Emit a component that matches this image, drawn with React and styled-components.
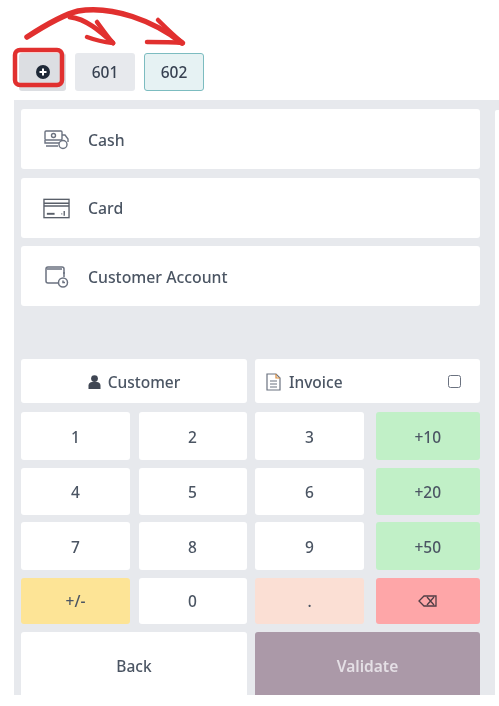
import React from "react";
import styled, { createGlobalStyle } from "styled-components";

const Global = createGlobalStyle`
  html, body { margin: 0; padding: 0; background: #fff; }
  body { font-family: "Noto Sans", "Open Sans", sans-serif; color: #4b5563; }
`;

const Page = styled.div`
  position: relative;
  width: 499px;
  height: 706px;
  overflow: hidden;
  filter: blur(0.5px);
  background: #fff;
`;

const Tabs = styled.div`
  display: flex;
  gap: 8px;
  height: 38px;
  padding: 53px 0 0 19px;
`;

const Tab = styled.div`
  width: 60px;
  height: 38px;
  box-sizing: border-box;
  border-radius: 3px;
  display: flex;
  align-items: center;
  justify-content: center;
  font-size: 15.5px;
  font-weight: 500;
  color: #374151;
  background: ${(p) => (p.$active ? "#e6f2f3" : "#e7e9ed")};
  border: ${(p) => (p.$active ? "1px solid #7cbcc0" : "none")};
  & + & { margin-left: ${(p) => (p.$active ? "1px" : "0")}; }
`;

const AddTab = styled(Tab)`
  width: 47px;
  padding-left: 1px;
  background: #dcdee2;
`;

const Panel = styled.main`
  margin: 9px 0 0 14px;
  height: 595px;
  box-sizing: border-box;
  background: #e7e9ed;
  padding: 9px 19px 0 7px;
  display: flex;
  flex-direction: column;
`;

const Methods = styled.div`
  display: flex;
  flex-direction: column;
  gap: 8.5px;
`;

const Method = styled.div`
  height: 60px;
  box-sizing: border-box;
  padding: 1px 0 0 22px;
  background: #fff;
  border-radius: 3px;
  display: flex;
  align-items: center;
  gap: 18px;
  font-size: 15.8px;
  font-weight: 500;
  color: #4b5563;
`;

const IconSlot = styled.span`
  width: 27px;
  height: 24px;
  display: flex;
  align-items: center;
  justify-content: center;
  color: #6b7280;
`;

const Actions = styled.div`
  margin-top: 53px;
  display: grid;
  grid-template-columns: 226px 225px;
  gap: 8px;
`;

const Action = styled.div`
  height: 44px;
  box-sizing: border-box;
  background: #fff;
  border-radius: 3px;
  display: flex;
  align-items: center;
  justify-content: ${(p) => (p.$spread ? "flex-start" : "center")};
  gap: ${(p) => (p.$spread ? "8px" : "7px")};
  padding: ${(p) => (p.$spread ? "1px 19px 0 11px" : "1px 0 0")};
  font-size: 15.5px;
  font-weight: 500;
  color: #4b5563;
`;

const Check = styled.span`
  margin-left: auto;
  width: 11px;
  height: 11px;
  border: 1.5px solid #6b7280;
  border-radius: 2.5px;
`;

const Pad = styled.div`
  margin-top: 9px;
  display: grid;
  grid-template-columns: 109px 108px 109px 107.5px;
  grid-template-rows: 48px 47px 48px 46px;
  column-gap: 8.5px;
  row-gap: 7.5px;
  & > :nth-child(4n) { margin-left: 3px; }
`;

const keyColors = { green: "#c1f0c7", yellow: "#fde496", peach: "#fbdfd4", red: "#fea6a8", white: "#fff" };

const Key = styled.div`
  box-sizing: border-box;
  padding-top: 1px;
  background: ${(p) => keyColors[p.$tone || "white"]};
  border-radius: 3px;
  display: flex;
  align-items: center;
  justify-content: center;
  font-size: 15.5px;
  font-weight: 500;
  color: #4b5563;
`;

const Bottom = styled.div`
  margin-top: 8px;
  display: grid;
  grid-template-columns: 226px 225px;
  gap: 8px;
`;

const BigButton = styled.div`
  height: 63px;
  box-sizing: border-box;
  padding-top: 5px;
  border-radius: 3px 3px 0 0;
  display: flex;
  align-items: center;
  justify-content: center;
  font-size: 15.5px;
  font-weight: ${(p) => (p.$primary ? 600 : 500)};
  color: ${(p) => (p.$primary ? "#e4dfe5" : "#4b5563")};
  background: ${(p) => (p.$primary ? "#ab99a8" : "#fff")};
`;

const Sliver = styled.div`
  position: absolute;
  left: 495px;
  top: 110px;
  width: 4px;
  height: 585px;
  background: #fff;
  border-radius: 2px 0 0 0;
`;

const Annotation = styled.svg`
  position: absolute;
  left: 0;
  top: 0;
  pointer-events: none;
`;

const CashIcon = () => (
  <svg width="25" height="20" viewBox="0 0 25 20" fill="none" stroke="currentColor" strokeWidth="1.4">
    <rect x="1" y="1" width="17" height="9" rx="1" />
    <circle cx="9.500" cy="5.500" r="2" />
    <path d="M1 10v3h14M2 16h12M18 5h3l3 4v3" />
    <circle cx="19" cy="14.500" r="4" fill="#fff" />
  </svg>
);
const CardIcon = () => (
  <svg width="28" height="21" viewBox="0 0 28 21" fill="none" stroke="#595f69" strokeWidth="1.4">
    <rect x="1" y="1" width="26" height="19" />
    <path d="M1 5h26M1 8h26" strokeWidth="1.6" />
    <path d="M4 16h8" strokeWidth="2" />
    <path d="M22 13v5M19 16h1" />
  </svg>
);
const AccountIcon = () => (
  <svg width="24" height="23" viewBox="0 0 24 23" fill="none" stroke="currentColor" strokeWidth="1.500">
    <path d="M15 18H3a2 2 0 0 1-2-2V4a2 2 0 0 1 2-2h14a2 2 0 0 1 2 2v8" />
    <path d="M2 4h15M19 7v2" />
    <circle cx="18" cy="17.500" r="4.500" fill="#fff" />
    <path d="M18 15.500v2h2" />
  </svg>
);
const UserIcon = () => (
  <svg width="13" height="14" viewBox="0 0 13 14" fill="#3f4653">
    <circle cx="6.500" cy="3.600" r="3.400" />
    <path d="M0.500 14v-3.500C.5 8.300 2.300 7 4 7h5c1.700 0 3.500 1.300 3.500 3.500V14z" />
  </svg>
);
const DocIcon = () => (
  <svg width="15" height="18" viewBox="0 0 15 18" fill="none" stroke="#6b7280" strokeWidth="1.2">
    <path d="M1 1h9l4 4v12H1z" />
    <path d="M10 1v4h4" stroke="#d98b3a" />
    <path d="M4 8h7M4 11h7M4 14h7" />
  </svg>
);
const BackspaceIcon = () => (
  <svg width="19" height="12" viewBox="0 0 19 12" fill="none" stroke="#4f3d44" strokeWidth="1.300">
    <path d="M6 1h12v10H6L1 6z" />
    <path d="M9 2l7 8M16 2l-7 8" />
  </svg>
);
const PlusCircle = () => (
  <svg width="14" height="14" viewBox="0 0 14 14">
    <circle cx="7" cy="7" r="7" fill="#1f2937" />
    <path d="M7 3.500v7M3.500 7h7" stroke="#fff" strokeWidth="2" />
  </svg>
);

export default function App() {
  return (
    <>
      <Global />
      <Page>
        <Tabs>
          <AddTab><PlusCircle /></AddTab>
          <Tab>601</Tab>
          <Tab $active>602</Tab>
        </Tabs>
        <Panel>
          <Methods>
            <Method><IconSlot><CashIcon /></IconSlot>Cash</Method>
            <Method><IconSlot><CardIcon /></IconSlot>Card</Method>
            <Method><IconSlot><AccountIcon /></IconSlot>Customer Account</Method>
          </Methods>
          <Actions>
            <Action><UserIcon />Customer</Action>
            <Action $spread><DocIcon />Invoice<Check /></Action>
          </Actions>
          <Pad>
            <Key>1</Key><Key>2</Key><Key>3</Key><Key $tone="green">+10</Key>
            <Key>4</Key><Key>5</Key><Key>6</Key><Key $tone="green">+20</Key>
            <Key>7</Key><Key>8</Key><Key>9</Key><Key $tone="green">+50</Key>
            <Key $tone="yellow">+/-</Key><Key>0</Key><Key $tone="peach">.</Key><Key $tone="red"><BackspaceIcon /></Key>
          </Pad>
          <Bottom>
            <BigButton>Back</BigButton>
            <BigButton $primary>Validate</BigButton>
          </Bottom>
        </Panel>
        <Sliver />
        <Annotation width="499" height="100" viewBox="0 0 499 100" fill="none" stroke="#e1302f" strokeLinecap="round" strokeLinejoin="round">
          <rect x="15" y="50" width="47" height="35" rx="5" strokeWidth="4.500" />
          <path d="M27 37C44 26 62 15 78 11c34-6 76 10 104 32" strokeWidth="5.500" />
          <path d="M70 17c16 2 30 14 43 26" strokeWidth="5" />
          <path d="M97 22c5 7 10 14 16 21-9-1-18-3-26-6" strokeWidth="4.500" />
          <path d="M158 20c8 8 16 16 25 23-12-1-24-1-36-1" strokeWidth="4.500" />
        </Annotation>
      </Page>
    </>
  );
}
